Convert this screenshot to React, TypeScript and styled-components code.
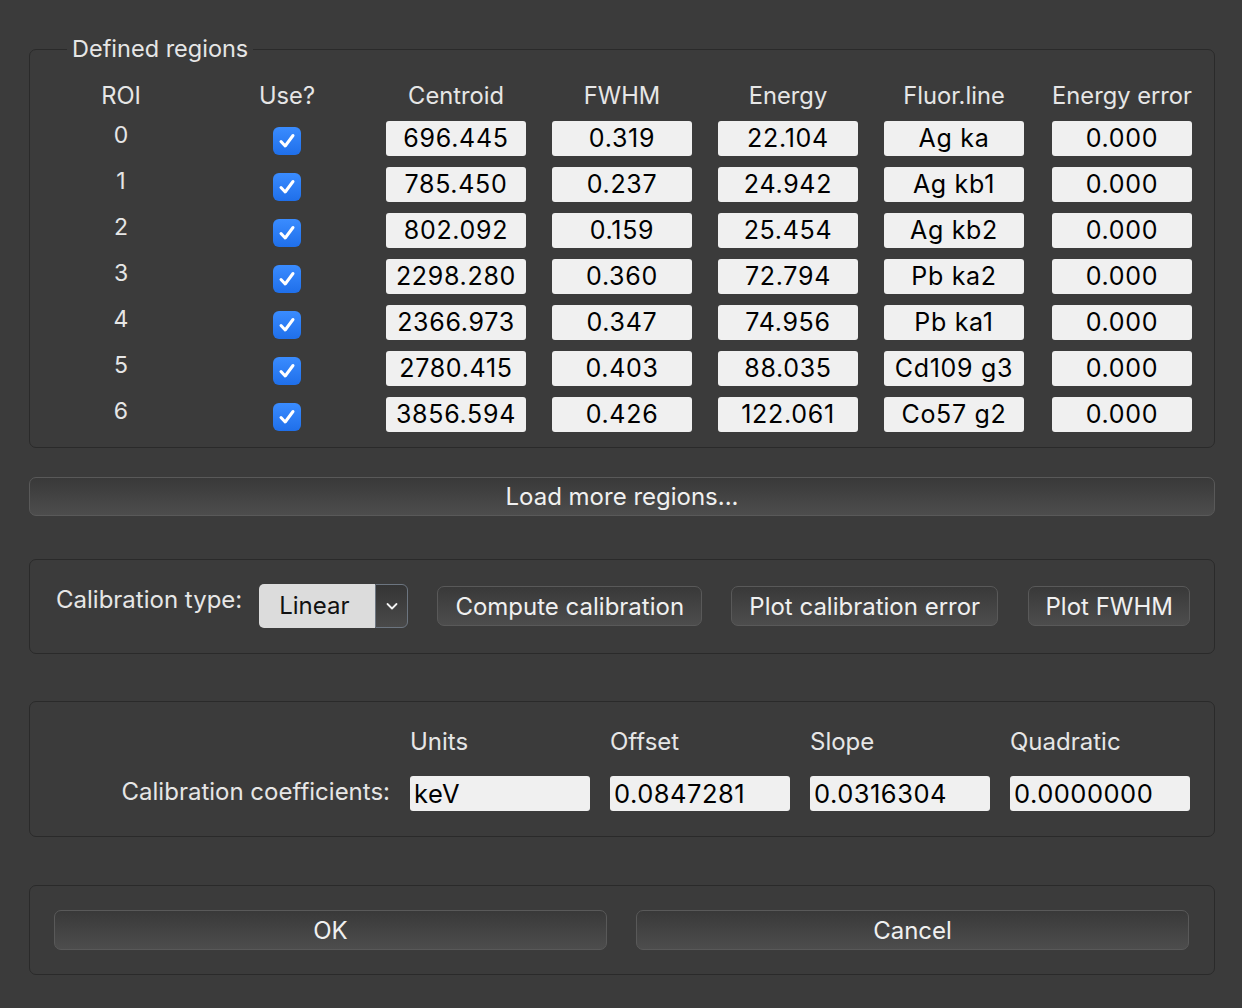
import React from "react";
import styled, { createGlobalStyle } from "styled-components";

const Global = createGlobalStyle`
  html, body { margin: 0; padding: 0; background: #3b3b3b; }
  body { font-family: Inter, "Noto Sans", "Liberation Sans", sans-serif; color: #e4e4e4; }
  * { box-sizing: border-box; }
`;

const Dialog = styled.div`
  width: 1242px;
  height: 1008px;
  padding: 35px 27px 0 29px;
  display: flex;
  flex-direction: column;
  background: #3b3b3b;
`;

const Group = styled.fieldset`
  margin: 0;
  padding: 17px 0 15px 0;
  border: 1px solid #2a2a2a;
  border-radius: 7px;
  min-width: 0;
`;

const Legend = styled.legend`
  margin-left: 37px;
  padding: 0 5px;
  font-size: 23.5px;
  line-height: 28px;
  color: #e6e6e6;
`;

const Box = styled.div<{ $mt: number; $pt: number; $pb: number }>`
  margin-top: ${(p) => p.$mt}px;
  padding-top: ${(p) => p.$pt}px;
  padding-bottom: ${(p) => p.$pb}px;
  border: 1px solid #2a2a2a;
  border-radius: 7px;
`;

const RoiGrid = styled.div`
  display: grid;
  grid-template-columns: 182px 98px 164px 140px 140px 140px 142px;
  grid-auto-rows: 35px;
  grid-template-rows: 30px;
  column-gap: 26px;
  row-gap: 11px;
  align-items: center;
`;

const Head = styled.div<{ $field?: boolean }>`
  font-size: 23.7px;
  text-align: center;
  color: #e6e6e6;
  justify-self: ${(p) => (p.$field ? "end" : "stretch")};
  width: ${(p) => (p.$field ? "140px" : "auto")};
  white-space: nowrap;
`;

const RoiNum = styled.div`
  font-size: 23px;
  text-align: center;
  color: #e6e6e6;
  padding-bottom: 7px;
`;

const CheckCell = styled.div`
  display: flex;
  justify-content: center;
  padding-top: 4px;
`;

const Check = styled.div`
  width: 28px;
  height: 28px;
  border-radius: 6px;
  background: linear-gradient(#3a8cff, #1f6fea);
  display: flex;
  align-items: center;
  justify-content: center;
`;

const Field = styled.div`
  justify-self: end;
  width: 140px;
  height: 35px;
  background: #f0f0f0;
  border-radius: 3px;
  color: #000;
  font-size: 25px;
  line-height: 35px;
  text-align: center;
  letter-spacing: 0.7px;
  white-space: nowrap;
  overflow: hidden;
`;

const PushButton = styled.button<{ $w?: number }>`
  height: 40px;
  width: ${(p) => (p.$w ? `${p.$w}px` : "100%")};
  border: 1px solid #595959;
  border-radius: 7px;
  background: linear-gradient(#393939, #4d4d4d);
  color: #f0f0f0;
  font-family: inherit;
  font-size: 24px;
  padding: 0;
  flex-shrink: 0;
`;

const WideButton = styled(PushButton)`
  margin-top: 29px;
  height: 39px;
`;

const CalRow = styled.div`
  display: flex;
  align-items: center;
  padding-left: 26px;
`;

const CalLabel = styled.div`
  font-size: 24px;
  color: #e6e6e6;
  margin-right: 17px;
  margin-bottom: 14px;
  white-space: nowrap;
`;

const Combo = styled.div`
  display: flex;
  height: 44px;
  width: 149px;
  margin-right: 29px;
`;

const ComboValue = styled.div`
  width: 116px;
  background: #dcdcdc;
  color: #111;
  font-size: 24px;
  line-height: 44px;
  padding-left: 20px;
  border-radius: 5px 0 0 5px;
`;

const ComboArrow = styled.div`
  flex: 1;
  border: 1.5px solid #6c7580;
  border-radius: 0 6px 6px 0;
  background: linear-gradient(#353535, #4a4a4a);
  display: flex;
  align-items: center;
  justify-content: center;
`;

const ButtonGap = styled.div<{ $w: number }>`
  width: ${(p) => p.$w}px;
  flex-shrink: 0;
`;

const CoefGrid = styled.div`
  display: grid;
  grid-template-columns: 360px 180px 180px 180px 180px;
  grid-template-rows: 30px 35px;
  column-gap: 20px;
  row-gap: 20px;
  align-items: center;
`;

const CoefHead = styled.div`
  font-size: 24px;
  color: #e6e6e6;
`;

const CoefLabel = styled.div`
  font-size: 24px;
  color: #e6e6e6;
  text-align: right;
  white-space: nowrap;
  padding-bottom: 4px;
`;

const CoefField = styled.div`
  height: 35px;
  background: #f0f0f0;
  border-radius: 3px;
  color: #000;
  font-size: 25.5px;
  line-height: 35px;
  letter-spacing: 0.5px;
  padding-left: 4px;
  white-space: nowrap;
  overflow: hidden;
`;

const ActionRow = styled.div`
  display: grid;
  grid-template-columns: 1fr 1fr;
  column-gap: 29px;
  padding: 0 25px 0 24px;
`;

const rows = [
  ["696.445", "0.319", "22.104", "Ag ka", "0.000"],
  ["785.450", "0.237", "24.942", "Ag kb1", "0.000"],
  ["802.092", "0.159", "25.454", "Ag kb2", "0.000"],
  ["2298.280", "0.360", "72.794", "Pb ka2", "0.000"],
  ["2366.973", "0.347", "74.956", "Pb ka1", "0.000"],
  ["2780.415", "0.403", "88.035", "Cd109 g3", "0.000"],
  ["3856.594", "0.426", "122.061", "Co57 g2", "0.000"],
];

const CheckIcon = () => (
  <svg width="20" height="20" viewBox="0 0 20 20">
    <path d="M4 10.5 L8.2 15 L16 4.5" fill="none" stroke="#fff" strokeWidth="3" strokeLinecap="round" strokeLinejoin="round" />
  </svg>
);

const Chevron = () => (
  <svg width="14" height="10" viewBox="0 0 14 10">
    <path d="M2.5 3 L7 7.5 L11.5 3" fill="none" stroke="#f2f2f2" strokeWidth="1.8" strokeLinecap="round" strokeLinejoin="round" />
  </svg>
);

export default function App() {
  return (
    <>
      <Global />
      <Dialog>
        <Group>
          <Legend>Defined regions</Legend>
          <RoiGrid>
            <Head>ROI</Head>
            <Head>Use?</Head>
            <Head $field>Centroid</Head>
            <Head $field>FWHM</Head>
            <Head $field>Energy</Head>
            <Head $field>Fluor.line</Head>
            <Head $field>Energy error</Head>
            {rows.map((r, i) => (
              <React.Fragment key={i}>
                <RoiNum>{i}</RoiNum>
                <CheckCell>
                  <Check>
                    <CheckIcon />
                  </Check>
                </CheckCell>
                {r.map((v, j) => (
                  <Field key={j}>{v}</Field>
                ))}
              </React.Fragment>
            ))}
          </RoiGrid>
        </Group>

        <WideButton>Load more regions...</WideButton>

        <Box $mt={43} $pt={24} $pb={25}>
          <CalRow>
            <CalLabel>Calibration type:</CalLabel>
            <Combo>
              <ComboValue>Linear</ComboValue>
              <ComboArrow>
                <Chevron />
              </ComboArrow>
            </Combo>
            <PushButton $w={265}>Compute calibration</PushButton>
            <ButtonGap $w={29} />
            <PushButton $w={267}>Plot calibration error</PushButton>
            <ButtonGap $w={30} />
            <PushButton $w={162}>Plot FWHM</PushButton>
          </CalRow>
        </Box>

        <Box $mt={47} $pt={24} $pb={25}>
          <CoefGrid>
            <div />
            <CoefHead>Units</CoefHead>
            <CoefHead>Offset</CoefHead>
            <CoefHead>Slope</CoefHead>
            <CoefHead>Quadratic</CoefHead>
            <CoefLabel>Calibration coefficients:</CoefLabel>
            <CoefField>keV</CoefField>
            <CoefField>0.0847281</CoefField>
            <CoefField>0.0316304</CoefField>
            <CoefField>0.0000000</CoefField>
          </CoefGrid>
        </Box>

        <Box $mt={48} $pt={24} $pb={24}>
          <ActionRow>
            <PushButton>OK</PushButton>
            <PushButton>Cancel</PushButton>
          </ActionRow>
        </Box>
      </Dialog>
    </>
  );
}
